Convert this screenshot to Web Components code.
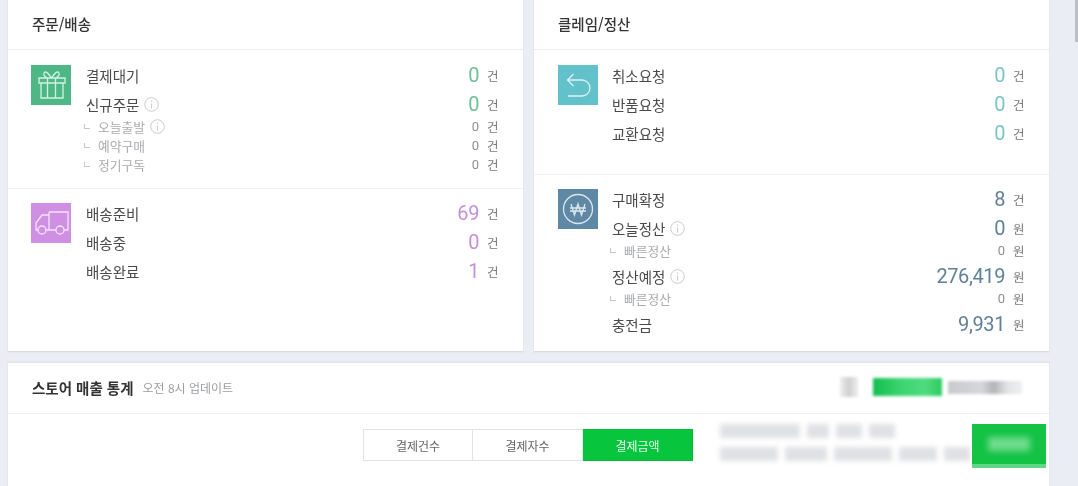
<!DOCTYPE html>
<html lang="ko">
<head>
<meta charset="utf-8">
<title>판매자 대시보드</title>
<style>
  html, body { margin: 0; height: 100%; overflow: hidden; background: #eaedf4; }
  body { font-family: "Noto Sans CJK KR", "Noto Sans", sans-serif; color: #444; }
</style>
</head>
<body>
<dash-page>
  <dash-card slot="left" heading="주문/배송" style="--first:139px;--pad:23px;--gap:15px">
    <stat-section kind="gift">
      <stat-row label="결제대기" value="0" unit="건"></stat-row>
      <stat-row label="신규주문" value="0" unit="건" info></stat-row>
      <stat-row sub label="오늘출발" value="0" unit="건" info></stat-row>
      <stat-row sub label="예약구매" value="0" unit="건"></stat-row>
      <stat-row sub label="정기구독" value="0" unit="건"></stat-row>
    </stat-section>
    <stat-section kind="truck">
      <stat-row label="배송준비" value="69" unit="건"></stat-row>
      <stat-row label="배송중" value="0" unit="건"></stat-row>
      <stat-row label="배송완료" value="1" unit="건"></stat-row>
    </stat-section>
  </dash-card>
  <dash-card slot="right" heading="클레임/정산" style="--first:125px;--pad:24px;--gap:14px">
    <stat-section kind="back">
      <stat-row label="취소요청" value="0" unit="건"></stat-row>
      <stat-row label="반품요청" value="0" unit="건"></stat-row>
      <stat-row label="교환요청" value="0" unit="건"></stat-row>
    </stat-section>
    <stat-section kind="won">
      <stat-row label="구매확정" value="8" unit="건"></stat-row>
      <stat-row label="오늘정산" value="0" unit="원" info></stat-row>
      <stat-row sub label="빠른정산" value="0" unit="원"></stat-row>
      <stat-row label="정산예정" value="276,419" unit="원" info></stat-row>
      <stat-row sub label="빠른정산" value="0" unit="원"></stat-row>
      <stat-row label="충전금" value="9,931" unit="원"></stat-row>
    </stat-section>
  </dash-card>
  <sales-stats slot="bottom"></sales-stats>
</dash-page>

<script>
const pageTemplate = document.createElement('template')
pageTemplate.innerHTML = `
  <style>
    :host { display: block; padding: 0 29px 0 8px; filter: blur(.35px); }
    .top { display: grid; grid-template-columns: 515px 515px; gap: 11px; height: 352px; }
    .bottom { margin-top: 10px; }
    .scroll { position: fixed; top: 0; right: 0; width: 3px; height: 42px; background: #bcbfc6; }
  </style>
  <div class="top"><slot name="left"></slot><slot name="right"></slot></div>
  <div class="bottom"><slot name="bottom"></slot></div>
  <div class="scroll"></div>
`

class DashPage extends HTMLElement {
  constructor () {
    super()
    this.attachShadow({ mode: 'open' }).appendChild(pageTemplate.content.cloneNode(true))
  }
}

const cardTemplate = document.createElement('template')
cardTemplate.innerHTML = `
  <style>
    :host {
      display: flex; flex-direction: column; box-sizing: border-box; height: 352px;
      background: #fff; border-bottom: 1px solid #d9dce2; box-shadow: 0 0 0 1px #e4e7ee;
    }
    h2 {
      margin: 0; height: 50px; flex: none; box-sizing: border-box; padding: 0 0 2px 24px;
      display: flex; align-items: center;
      font: 500 14.500px "Noto Sans CJK KR", sans-serif; color: #333;
      border-bottom: 1px solid #eceef1;
    }
    .body { flex: 1; display: flex; flex-direction: column; }
    ::slotted(stat-section:first-child) { height: var(--first); padding-top: 15px; border-bottom: 1px solid #f0f1f4; }
  </style>
  <h2 id="title"></h2>
  <div class="body"><slot></slot></div>
`

class DashCard extends HTMLElement {
  constructor () {
    super()
    this.attachShadow({ mode: 'open' }).appendChild(cardTemplate.content.cloneNode(true))
    this.shadowRoot.getElementById('title').textContent = this.getAttribute('heading')
  }
}

const icons = {
  gift: `<path d="M10 18h22v15H10zM8 13h26v5H8zM16.500 13v20M24.500 13v20M20.500 13c-2-3-4-6-6-6s-3 4 2 6M20.500 13c2-3 4-6 6-6s3 4-2 6"/>`,
  truck: `<path d="M18 9h19v18h-4M25 27H15M18 9v18M18 12h-7l-6 8v7h2"/><circle cx="11" cy="27" r="4"/><circle cx="29" cy="27" r="4"/>`,
  back: `<path d="M10 15h14a8 8 0 0 1 0 16H10M15.500 9l-6 6 6 6"/>`,
  won: `<circle cx="20" cy="20" r="14.500"/><path d="M13 15l3.500 11L20 15l3.500 11L27 15M12 19h16M12 22h16"/>`
}
const tones = {
  gift: ['#4db886', '#d3f1e3', '#6fbf98'],
  truck: ['#cf8fe3', '#f5e3fb', '#c58fd8'],
  back: ['#63c1cb', '#dcf4f6', '#7cc4cc'],
  won: ['#5f88a5', '#dbe7ef', '#5f8199']
}

const sectionTemplate = document.createElement('template')
sectionTemplate.innerHTML = `
  <style>
    :host { display: flex; box-sizing: border-box; padding: 14px 25px 0 var(--pad); gap: var(--gap); flex: none; }
    svg { flex: none; width: 40px; height: 40px; display: block; }
    svg * { fill: none; stroke-width: 1.300; }
    .rows { flex: 1; display: flex; flex-direction: column; margin-top: -2px; }
  </style>
  <svg viewBox="0 0 40 40" id="icon"></svg>
  <div class="rows"><slot></slot></div>
`

class StatSection extends HTMLElement {
  constructor () {
    super()
    this.attachShadow({ mode: 'open' }).appendChild(sectionTemplate.content.cloneNode(true))
    const kind = this.getAttribute('kind')
    const svg = this.shadowRoot.getElementById('icon')
    svg.innerHTML = icons[kind]
    svg.style.background = tones[kind][0]
    svg.style.stroke = tones[kind][1]
    this.style.setProperty('--tone', tones[kind][2])
  }
}

const rowTemplate = document.createElement('template')
rowTemplate.innerHTML = `
  <style>
    :host { display: flex; align-items: center; height: 24px; margin-top: 5px; font-size: 14.500px; color: #4a4a4a; }
    :host(:first-child) { margin-top: 0; }
    :host([sub]) { box-sizing: border-box; height: 19px; padding-top: 2px; margin-top: 0; font-size: 12.800px; color: #a9abae; }
    .mark { display: none; width: 5px; height: 4px; margin: 0 8px 0 -2px; border: solid #c4c6c9; border-width: 0 0 1px 1px; }
    :host([sub]) .mark { display: block; }
    .info { display: none; width: 15px; height: 15px; margin-left: 5px; fill: none; stroke: #c9cbce; }
    :host([info]) .info { display: block; }
    .value {
      margin-left: auto; font: 20px Roboto, sans-serif; letter-spacing: -.4px; color: var(--tone);
    }
    :host([sub]) .value { font-size: 13px; letter-spacing: 0; color: #8e9093; }
    .unit { width: 11px; margin-left: 8px; font-size: 12.500px; color: #77797c; white-space: nowrap; }
  </style>
  <span class="mark"></span>
  <span id="label"></span>
  <svg class="info" viewBox="0 0 15 15"><circle cx="7.500" cy="7.500" r="6.800"/><path d="M7.500 6.500v5M7.500 3.500v1.500"/></svg>
  <span class="value" id="value"></span>
  <span class="unit" id="unit"></span>
`

class StatRow extends HTMLElement {
  constructor () {
    super()
    this.attachShadow({ mode: 'open' }).appendChild(rowTemplate.content.cloneNode(true))
    for (const key of ['label', 'value', 'unit']) {
      this.shadowRoot.getElementById(key).textContent = this.getAttribute(key)
    }
  }
}

const statsTemplate = document.createElement('template')
statsTemplate.innerHTML = `
  <style>
    :host { display: block; background: #fff; border-top: 1px solid #e3e6ec; height: 130px; box-shadow: 0 0 0 1px #e4e7ee; }
    .head {
      display: flex; align-items: center; height: 51px; box-sizing: border-box;
      padding: 0 27px 2px 24px; border-bottom: 1px solid #eceef1;
    }
    h2 { margin: 0; font: 700 14.500px "Noto Sans CJK KR", sans-serif; color: #333; }
    small { margin-left: 9px; font-size: 12px; color: #9b9da0; }
    .who { margin-left: auto; display: flex; align-items: center; filter: blur(1.500px); }
    .who i { display: block; }
    .person { width: 18px; height: 20px; background: linear-gradient(90deg, #eee, #cfcfcf 50%, #eee); }
    .green { width: 69px; height: 18px; margin-left: 15px; background: linear-gradient(90deg, #12bd4e, #3bd46f 40%, #4fdb80 75%, #2ccb60); }
    .gray { width: 74px; height: 13px; margin-left: 6px; background: linear-gradient(90deg, #c8c9cd, #d6d7da 45%, #b3b4b8 62%, #e2e3e6 80%, #eeeff1); }
    .tools { display: flex; align-items: flex-start; padding: 10px 3px 0 355px; }
    .tabs { display: flex; margin-top: 5px; }
    .note { margin: 0 0 0 27px; width: 250px; display: flex; flex-direction: column; gap: 9px; filter: blur(2.500px); }
    .note div { display: flex; gap: 7px; }
    .note i { display: block; height: 14px; background: #e0e1e4; }
    .go { width: 74px; height: 40px; margin-left: auto; background: #14c244; flex: none; position: relative; border-bottom: 4px solid #62d685; }
    .go i { position: absolute; left: 16px; top: 13px; width: 42px; height: 14px; background: #6fdc8e; filter: blur(3px); }
  </style>
  <div class="head">
    <h2>스토어 매출 통계</h2><small>오전 8시 업데이트</small>
    <div class="who">
      <i class="person"></i>
      <i class="green"></i>
      <i class="gray"></i>
    </div>
  </div>
  <div class="tools">
    <div class="tabs">
      <tab-button>결제건수</tab-button>
      <tab-button>결제자수</tab-button>
      <tab-button active>결제금액</tab-button>
    </div>
    <div class="note">
      <div><i style="width:80px"></i><i style="width:22px"></i><i style="width:26px"></i><i style="width:26px"></i></div>
      <div><i style="width:58px"></i><i style="width:42px"></i><i style="width:58px"></i><i style="width:38px"></i><i style="width:26px"></i></div>
    </div>
    <div class="go"><i></i></div>
  </div>
`

class SalesStats extends HTMLElement {
  constructor () {
    super()
    this.attachShadow({ mode: 'open' }).appendChild(statsTemplate.content.cloneNode(true))
  }
}

const tabTemplate = document.createElement('template')
tabTemplate.innerHTML = `
  <style>
    :host {
      display: flex; align-items: center; justify-content: center; box-sizing: border-box;
      width: 110px; height: 32px; background: #fff; border: 1px solid #e2e3e6; border-left-width: 0;
      font-size: 12px; color: #666;
    }
    :host(:first-child) { border-left-width: 1px; }
    :host([active]) { background: #07c53d; border-color: #07b93a; color: #eafff0; }
  </style>
  <slot></slot>
`

class TabButton extends HTMLElement {
  constructor () {
    super()
    this.attachShadow({ mode: 'open' }).appendChild(tabTemplate.content.cloneNode(true))
  }
}

customElements.define('tab-button', TabButton)
customElements.define('sales-stats', SalesStats)
customElements.define('stat-row', StatRow)
customElements.define('stat-section', StatSection)
customElements.define('dash-card', DashCard)
customElements.define('dash-page', DashPage)
</script>
</body>
</html>
